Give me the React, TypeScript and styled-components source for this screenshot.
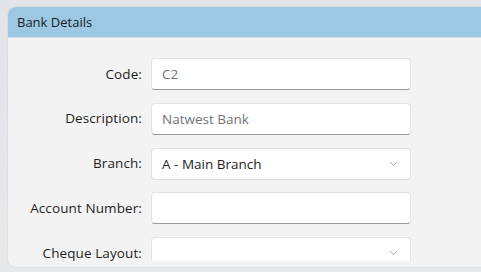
import React, { FC } from 'react';
import styled, { createGlobalStyle } from 'styled-components';

const Global = createGlobalStyle`
  html, body { margin: 0; padding: 0; }
  body {
    width: 481px;
    height: 272px;
    overflow: hidden;
    background: linear-gradient(#e2e4e7, #e6e8ea);
    font-family: "Segoe UI", "Open Sans", "Noto Sans", sans-serif;
  }
`;

const Page = styled.div`
  padding: 7px 0 0 8px;
  height: 272px;
  box-sizing: border-box;
`;

const Panel = styled.section`
  width: 490px;
  height: 260px;
  background: #f3f3f3;
  border-radius: 8px;
  overflow: hidden;
  box-shadow: 0 0 2px rgba(0, 0, 0, 0.12);
  display: flex;
  flex-direction: column;
`;

const Header = styled.div`
  height: 30px;
  flex: none;
  background: #9dc8e4;
  border-bottom: 1px solid #d2dde6;
  display: flex;
  align-items: center;
  padding-left: 9px;
  font-size: 13px;
  color: #1b1b1b;
`;

const Body = styled.div`
  height: 223px;
  overflow: hidden;
  padding-top: 20px;
  box-sizing: border-box;
  display: flex;
  flex-direction: column;
  gap: 12.75px;
`;

const Row = styled.div`
  display: grid;
  grid-template-columns: 134px 260px;
  column-gap: 9px;
  align-items: center;
  flex: none;
`;

const Label = styled.label`
  text-align: right;
  font-size: 13.5px;
  line-height: 13px;
  color: #1e1e1e;
  letter-spacing: 0.1px;
`;

const Field = styled.div<{ $line?: boolean }>`
  height: 32px;
  box-sizing: border-box;
  background: #fff;
  border: 1px solid #e3e3e3;
  border-bottom-color: ${(p) => (p.$line ? '#9a9a9a' : '#dcdcdc')};
  border-radius: 4px;
  display: flex;
  align-items: center;
  justify-content: space-between;
  padding: 0 12px 0 10px;
`;

const Value = styled.span<{ $muted?: boolean }>`
  font-size: 13.5px;
  color: ${(p) => (p.$muted ? '#6f7378' : '#1e1e1e')};
`;

const Chevron: FC = () => (
  <svg width="9" height="6" viewBox="0 0 9 6">
    <path d="M1 1l3.5 3.5L8 1" fill="none" stroke="#a6a9b4" strokeWidth="1" />
  </svg>
);

const rows = [
  { label: 'Code:', value: 'C2', muted: true, line: true },
  { label: 'Description:', value: 'Natwest Bank', muted: true, line: true },
  { label: 'Branch:', value: 'A - Main Branch', select: true },
  { label: 'Account Number:', value: '', line: true },
  { label: 'Cheque Layout:', value: '', select: true },
];

const App: FC = () => (
  <>
    <Global />
    <Page>
      <Panel>
        <Header>Bank Details</Header>
        <Body>
          {rows.map((r) => (
            <Row key={r.label}>
              <Label>{r.label}</Label>
              <Field $line={r.line}>
                <Value $muted={r.muted}>{r.value}</Value>
                {r.select && <Chevron />}
              </Field>
            </Row>
          ))}
        </Body>
      </Panel>
    </Page>
  </>
);

export default App;
